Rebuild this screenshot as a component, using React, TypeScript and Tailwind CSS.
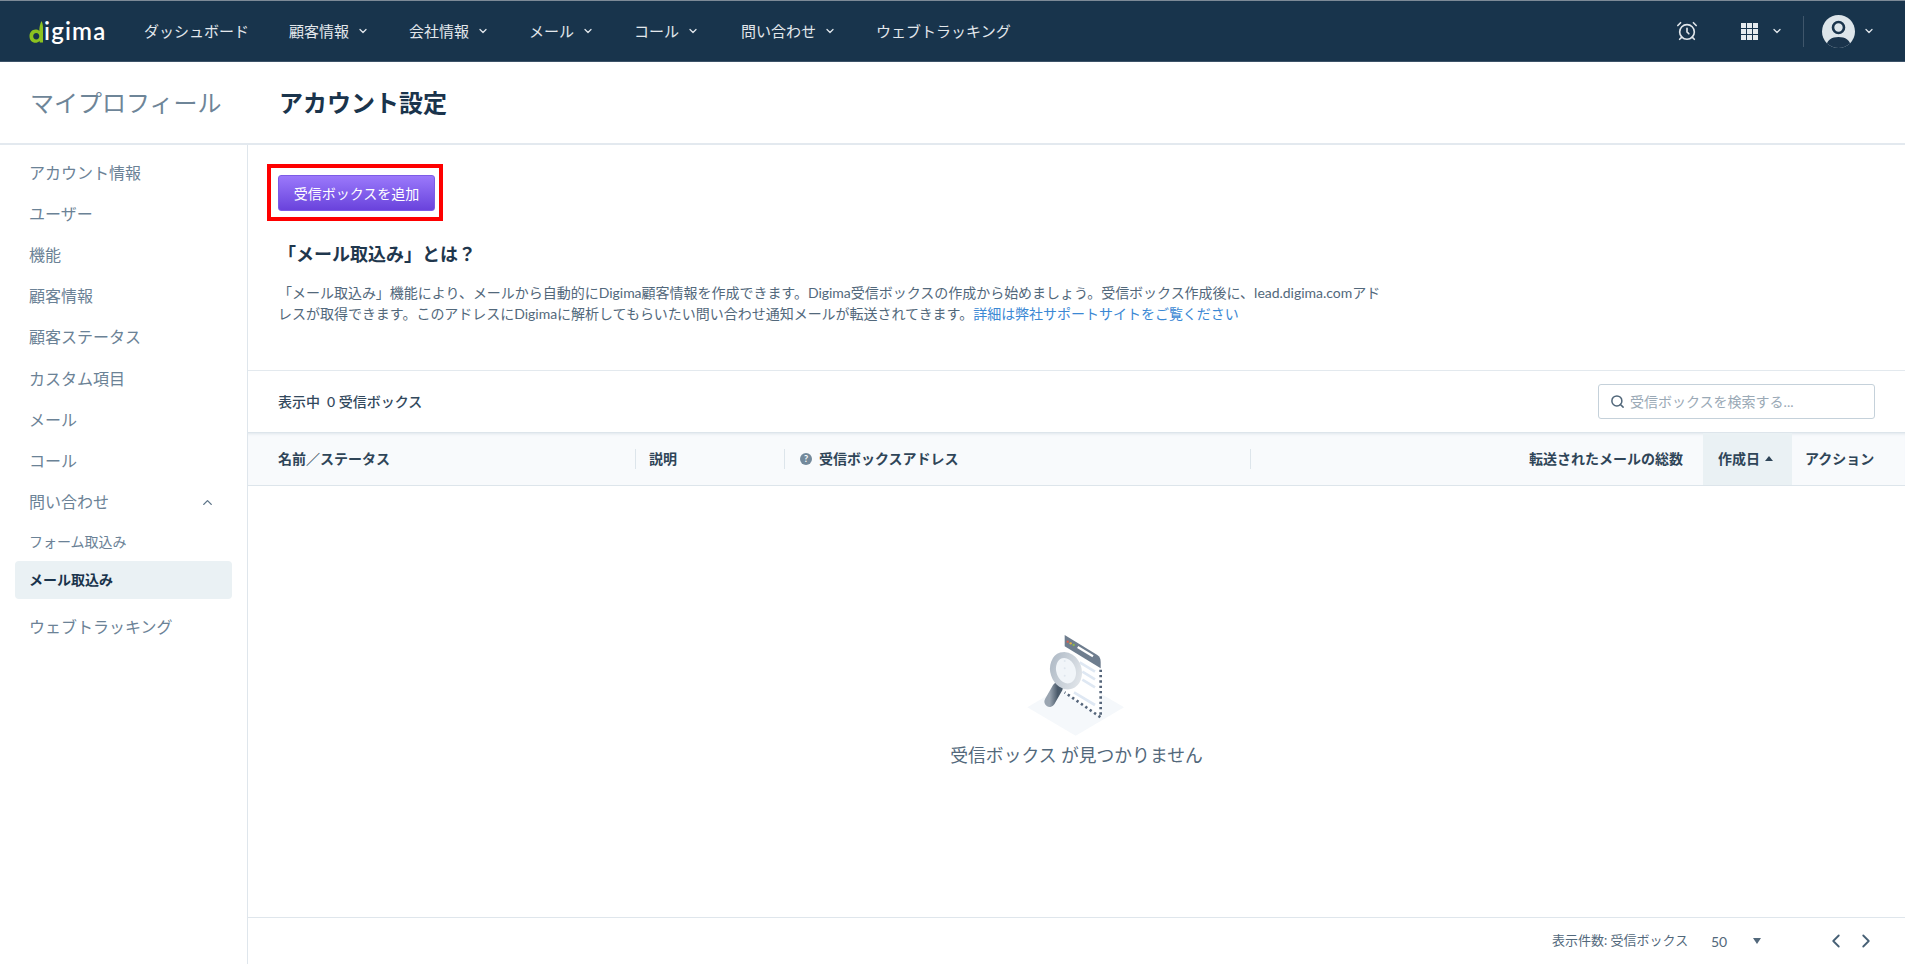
import { AlarmClock, ChevronDown, ChevronLeft, ChevronRight, ChevronUp, Search } from "lucide-react";

const navItems = [
  { label: "ダッシュボード", menu: false, offset: "" },
  { label: "顧客情報", menu: true, offset: "" },
  { label: "会社情報", menu: true, offset: "" },
  { label: "メール", menu: true, offset: "" },
  { label: "コール", menu: true, offset: "" },
  { label: "問い合わせ", menu: true, offset: "ml-[2px]" },
  { label: "ウェブトラッキング", menu: false, offset: "" },
];

const sideItems = ["アカウント情報", "ユーザー", "機能", "顧客情報", "顧客ステータス", "カスタム項目", "メール", "コール"];

function Logo() {
  return (
    <div className="ml-[29px] flex h-[30px] w-[78px] items-end">
      <svg width="15" height="23" viewBox="0 0 15 23" className="mb-[2px] flex-none">
        <path d="M12.5 0 C13.6 2 14 4 14 7 L14 21.5 L10.8 21.5 L10.6 20 C9.4 21.2 8 21.8 6.5 21.8 C3 21.8 0.5 19 0.5 15.2 C0.5 11.5 3 8.6 6.5 8.6 C8 8.6 9.4 9.1 10.3 10 C10.3 6 11 3 12.5 0 Z M7.3 12 C5.3 12 4.2 13.4 4.2 15.2 C4.2 17 5.3 18.4 7.3 18.4 C9.2 18.4 10.3 17 10.3 15.2 C10.3 13.4 9.2 12 7.3 12 Z" fill="#8cc220" fillRule="evenodd" />
      </svg>
      <span className="font-['Lato',sans-serif] text-[24px] font-semibold leading-[30px] tracking-[1.2px] text-white">igima</span>
    </div>
  );
}

function AppsGrid() {
  return (
    <div className="grid w-[17px] grid-cols-3 gap-[1px]">
      {Array.from({ length: 9 }).map((_, i) => (
        <span key={i} className="h-[5px] w-[5px] bg-[#e6ebef]" />
      ))}
    </div>
  );
}

function Avatar() {
  return (
    <svg width="33" height="33" viewBox="0 0 33 33">
      <defs>
        <clipPath id="avatar-clip">
          <circle cx="16.5" cy="16.5" r="16.5" />
        </clipPath>
      </defs>
      <g clipPath="url(#avatar-clip)">
        <rect width="33" height="33" fill="#dde5ea" />
        <circle cx="16.5" cy="12.5" r="5.5" fill="#dde5ea" stroke="#1a344c" strokeWidth="2.6" />
        <path d="M4 33 C4 25 10 22 16.5 22 C23 22 29 25 29 33 Z" fill="#1a344c" />
      </g>
    </svg>
  );
}

function TopNav() {
  return (
    <header className="flex h-[62px] flex-none items-center border-t border-t-[#7d8a97] border-b border-b-[#3c5268] bg-[#18344c] text-[15px] text-[#e3e8ec]">
      <Logo />
      <nav className="ml-[37px] flex items-center gap-10">
        {navItems.map((item) => (
          <div key={item.label} className={`flex items-center ${item.offset}`}>
            <span>{item.label}</span>
            {item.menu && <ChevronDown size={12} strokeWidth={2.6} className="ml-2 text-[#dfe5ea]" />}
          </div>
        ))}
      </nav>
      <div className="ml-auto flex items-center">
        <AlarmClock size={22} strokeWidth={1.8} className="text-[#dfe5ea]" />
        <div className="ml-[43px]">
          <AppsGrid />
        </div>
        <ChevronDown size={12} strokeWidth={2.6} className="ml-[13px] text-[#dfe5ea]" />
        <div className="ml-[20px] h-[31px] w-px bg-[#3f566b]" />
        <div className="ml-[18px]">
          <Avatar />
        </div>
        <ChevronDown size={12} strokeWidth={2.6} className="ml-[8px] mr-[30px] text-[#dfe5ea]" />
      </div>
    </header>
  );
}

function Sidebar() {
  return (
    <aside className="w-[248px] flex-none border-r border-[#dfe6ec] px-[15px] pt-[7px] text-[16px] text-[#6b8296]">
      {sideItems.map((label) => (
        <div key={label} className="flex h-[41.2px] items-center px-[14px]">
          {label}
        </div>
      ))}
      <div className="flex h-[41.2px] items-center justify-between pl-[14px] pr-[17px]">
        <span>問い合わせ</span>
        <ChevronUp size={15} strokeWidth={2.2} className="text-[#5d7488]" />
      </div>
      <div className="flex h-[38px] items-center px-[14px] text-[14px]">フォーム取込み</div>
      <div className="flex h-[38px] items-center rounded-[4px] bg-[#eaf1f4] px-[14px] text-[14px] font-bold text-[#1a344c]">メール取込み</div>
      <div className="mt-[7.5px] flex h-[41.2px] items-center px-[14px]">ウェブトラッキング</div>
    </aside>
  );
}

function EmptyIllustration() {
  return (
    <svg width="115" height="112" viewBox="0 0 345 336">
      <defs>
        <linearGradient id="ring" x1="0" y1="0" x2="1" y2="1">
          <stop offset="0" stopColor="#aeb9c5" />
          <stop offset="1" stopColor="#e4e8ec" />
        </linearGradient>
        <linearGradient id="handle" x1="0" y1="0" x2="1" y2="0">
          <stop offset="0" stopColor="#9aa5b1" />
          <stop offset="1" stopColor="#4a5a6a" />
        </linearGradient>
      </defs>
      <path d="M25 235 L170 150 L315 235 L170 320 Z" fill="#f5f8fb" />
      <path d="M137 18 L235 78 Q245 85 245 98 L245 265 L137 190 Z" fill="#ffffff" />
      <path d="M137 18 L235 78 Q245 85 245 98 L245 118 L137 52 Z" fill="#6e7d8e" />
      <circle cx="146" cy="38" r="3.5" fill="#d9604f" />
      <circle cx="155" cy="43" r="3.5" fill="#e2b13c" />
      <circle cx="164" cy="48" r="3.5" fill="#8bb84a" />
      <path d="M176 54 L222 82" stroke="#ffffff" strokeWidth="7" />
      <path d="M245 122 L245 265 L137 190" fill="none" stroke="#55657a" strokeWidth="8" strokeDasharray="7 9" />
      <g stroke="#dfe8f3" strokeWidth="8">
        <path d="M182 100 L228 128" />
        <path d="M190 128 L228 151" />
        <path d="M190 152 L228 175" />
        <path d="M165 190 L228 228" />
      </g>
      <path d="M116 176 L92 218" stroke="url(#handle)" strokeWidth="32" strokeLinecap="round" />
      <ellipse cx="141" cy="125" rx="38" ry="48" transform="rotate(-18 141 125)" fill="#eef2f7" fillOpacity="0.8" stroke="url(#ring)" strokeWidth="18" />
      <g fill="#dfe6ee">
        <circle cx="137" cy="96" r="3" />
        <circle cx="137" cy="118" r="3" />
        <circle cx="137" cy="140" r="3" />
      </g>
    </svg>
  );
}

function MainPanel() {
  return (
    <main className="flex min-w-0 flex-1 flex-col">
      <section className="h-[225px] flex-none pl-[30px]">
        <div className="ml-[-11px] mt-[19px] w-fit border-4 border-[#fe0000] pb-[6px] pl-[7px] pr-[4px] pt-[7px]">
          <button className="flex h-9 w-[157px] items-center justify-center rounded-[3px] border border-[#7d5ce6] bg-gradient-to-b from-[#9b78fb] to-[#6a42dc] text-[14px] text-white">
            受信ボックスを追加
          </button>
        </div>
        <h2 className="mt-[20px] text-[18px] font-bold leading-[26px] text-[#1f374d]">「メール取込み」とは？</h2>
        <p className="mt-[16px] w-[1106px] text-[14px] leading-[20.5px] tracking-[-0.02px] text-[#52687b]">
          「メール取込み」機能により、メールから自動的にDigima顧客情報を作成できます。Digima受信ボックスの作成から始めましょう。受信ボックス作成後に、lead.digima.comアドレスが取得できます。このアドレスにDigimaに解析してもらいたい問い合わせ通知メールが転送されてきます。
          <a className="text-[#3b88d4]">詳細は弊社サポートサイトをご覧ください</a>
        </p>
      </section>

      <section className="flex h-[62px] flex-none items-center justify-between border-t border-[#e3e9ee] pl-[30px] pr-[30px]">
        <span className="text-[14px] font-medium text-[#33495d]">表示中 &nbsp;0 受信ボックス</span>
        <label className="flex h-[35px] w-[277px] items-center rounded-[3px] border border-[#c5d1da] px-[11px] text-[14px] text-[#9aa9b6]">
          <Search size={15} strokeWidth={2.4} className="mr-[5px] text-[#51677a]" />
          受信ボックスを検索する...
        </label>
      </section>

      <section className="flex h-[54px] flex-none items-stretch border-y border-y-[#dde5eb] bg-[#f8fafc] pb-px text-[14px] font-bold text-[#2f4558] shadow-[inset_0_3px_3px_-2px_#dfe6ec]">
        <div className="flex w-[387px] flex-none items-center pl-[30px]">名前／ステータス</div>
        <div className="h-5 w-px flex-none self-center bg-[#dde5eb]" />
        <div className="flex w-[148px] flex-none items-center pl-[13px]">説明</div>
        <div className="h-5 w-px flex-none self-center bg-[#dde5eb]" />
        <div className="flex w-[465px] flex-none items-center pl-[15px]">
          <span className="mr-[7px] flex h-3 w-3 items-center justify-center rounded-full bg-[#73899b] text-[9px] font-bold leading-none text-white">?</span>
          受信ボックスアドレス
        </div>
        <div className="h-5 w-px flex-none self-center bg-[#dde5eb]" />
        <div className="flex flex-1 items-center justify-end pr-[20px]">転送されたメールの総数</div>
        <div className="mb-[-1px] flex w-[89px] flex-none items-center bg-[#eaf1f4] pb-px pl-[15px]">
          作成日
          <span className="ml-[5px] h-0 w-0 border-x-[4px] border-b-[5px] border-x-transparent border-b-[#2f4558]" />
        </div>
        <div className="flex w-[113px] flex-none items-center pl-[13px]">アクション</div>
      </section>

      <section className="flex flex-1 flex-col items-center pt-[143px]">
        <EmptyIllustration />
        <p className="mt-px text-[17.8px] leading-[27px] text-[#52687b]">受信ボックス が見つかりません</p>
      </section>

      <footer className="flex h-[47px] flex-none items-center border-t border-[#dfe6ec] pl-[1304px] text-[13px] text-[#52687b]">
        <span className="w-[159px] flex-none">表示件数: 受信ボックス</span>
        <span className="w-[42px] flex-none font-['Lato',sans-serif] text-[14px]">50</span>
        <span className="h-0 w-0 flex-none border-x-[4px] border-t-[6px] border-x-transparent border-t-[#52687b]" />
        <ChevronLeft size={22} strokeWidth={2} className="ml-[64px] flex-none text-[#466075]" />
        <ChevronRight size={22} strokeWidth={2} className="ml-[8px] flex-none text-[#466075]" />
      </footer>
    </main>
  );
}

export default function App() {
  return (
    <div className="flex h-[964px] w-full flex-col overflow-hidden bg-white font-['Lato','Noto_Sans_CJK_JP',sans-serif]">
      <TopNav />
      <div className="flex h-[83px] flex-none items-center border-b-2 border-[#e3e9ef] text-[24px]">
        <h1 className="ml-[30px] w-[249px] text-[#6e8598]">マイプロフィール</h1>
        <h2 className="font-bold text-[#1a344c]">アカウント設定</h2>
      </div>
      <div className="flex min-h-0 flex-1">
        <Sidebar />
        <MainPanel />
      </div>
    </div>
  );
}
